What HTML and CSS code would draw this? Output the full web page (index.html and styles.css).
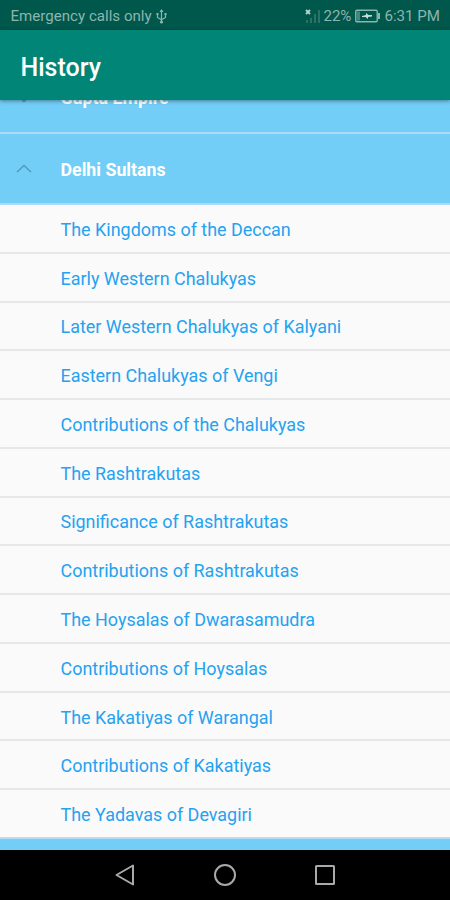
FILE: index.html
```
<!DOCTYPE html>
<html lang="en">
<head>
    <meta charset="UTF-8">
    <meta name="viewport" content="width=device-width, initial-scale=1.0">
    <title>History</title>
    <link rel="stylesheet" href="styles.css">
</head>
<body>
    <!-- Status Bar -->
    <div class="status-bar">
        <span class="carrier">Emergency calls only</span>
        <svg class="usb" width="11" height="15" viewBox="0 0 11 15">
            <path d="M5.5 1v11M1.5 5v3.5l4 2.2 4-2.2V5" fill="none" stroke="currentColor" stroke-width="1.2"/>
            <path d="M5.5 0l2 3h-4zM0.5 4h2v2h-2zM8.5 4h2v2h-2z" fill="currentColor"/>
            <circle cx="5.5" cy="13" r="1.6" fill="currentColor"/>
        </svg>
        <svg class="signal" width="16" height="15" viewBox="0 0 16 15">
            <path d="M1 1l4 4M5 1L1 5" stroke="#b9d2ce" stroke-width="1.8"/>
            <path d="M2 11v3M6 9v5M10 5v9M14 1v13" stroke="#2b7369" stroke-width="2"/>
        </svg>
        <span class="percent">22%</span>
        <svg class="battery" width="26" height="14" viewBox="0 0 26 14">
            <rect x="0.8" y="1.3" width="21.4" height="11.4" rx="1" fill="none" stroke="currentColor" stroke-width="1.4"/>
            <path d="M2 2.5h3v9H2z" fill="currentColor" opacity="0.5"/>
            <path d="M23 4h2v6h-2z" fill="currentColor"/>
            <path d="M7 7l4-1V4l2.500 2H17v1.500l-4 .5v2L10.500 8H7z" fill="#c5dcd8"/>
        </svg>
        <span class="clock">6:31 PM</span>
    </div>

    <!-- App Bar -->
    <header>
        <h1>History</h1>
    </header>

    <!-- Expandable List -->
    <main>
        <div class="group scrolled">
            <svg class="arrow" width="16" height="9" viewBox="0 0 16 9">
                <path d="M1 1l7 6.500 7-6.500"/>
            </svg>
            <h2>Gupta Empire</h2>
        </div>
        <div class="group">
            <svg class="arrow" width="16" height="9" viewBox="0 0 16 9">
                <path d="M1 8l7-6.500L15 8"/>
            </svg>
            <h2>Delhi Sultans</h2>
        </div>
        <ul>
            <li>The Kingdoms of the Deccan</li>
            <li>Early Western Chalukyas</li>
            <li>Later Western Chalukyas of Kalyani</li>
            <li>Eastern Chalukyas of Vengi</li>
            <li>Contributions of the Chalukyas</li>
            <li>The Rashtrakutas</li>
            <li>Significance of Rashtrakutas</li>
            <li>Contributions of Rashtrakutas</li>
            <li>The Hoysalas of Dwarasamudra</li>
            <li>Contributions of Hoysalas</li>
            <li>The Kakatiyas of Warangal</li>
            <li>Contributions of Kakatiyas</li>
            <li>The Yadavas of Devagiri</li>
        </ul>
        <div class="group"></div>
    </main>

    <!-- Navigation Buttons -->
    <nav>
        <svg width="22" height="24" viewBox="0 0 22 24">
            <path d="M19 2.500v19L2.500 12z"/>
        </svg>
        <svg width="24" height="24" viewBox="0 0 24 24">
            <circle cx="12" cy="12" r="10"/>
        </svg>
        <svg width="22" height="24" viewBox="0 0 22 24">
            <rect x="2" y="3" width="18" height="18" rx="0.5"/>
        </svg>
    </nav>
</body>
</html>
```

FILE: styles.css
```
* {
    box-sizing: border-box;
}

body {
    font-family: Roboto, sans-serif;
    margin: 0;
    height: 900px;
    display: flex;
    flex-direction: column;
    overflow: hidden;
    background-color: #fafafa;
}

.status-bar {
    flex: none;
    height: 30px;
    padding: 2px 10px 0 10.5px;
    display: flex;
    align-items: center;
    background-color: #00574b;
    color: #8db5af;
    font-size: 15.1px;
    white-space: nowrap;
}

.usb {
    margin-left: 4px;
}

.signal {
    margin-left: auto;
}

.percent {
    margin-left: 2px;
}

.battery {
    margin: 0 3px 0 4px;
}

header {
    flex: none;
    position: relative;
    height: 70px;
    padding: 4px 20px 0 20.5px;
    display: flex;
    align-items: center;
    background-color: #008577;
    box-shadow: 0 1px 4px rgba(0, 0, 0, 0.4);
}

h1 {
    margin: 0;
    color: white;
    font-size: 25px;
    font-weight: 500;
}

main {
    flex: 1;
    min-height: 0;
    overflow: hidden;
}

.group {
    height: 71.5px;
    padding-left: 16px;
    display: flex;
    align-items: center;
    background-color: #72cdf7;
    border-bottom: 2px solid #afdaf4;
}

.scrolled {
    margin-top: -38px;
}

.scrolled .arrow {
    margin-top: 3px;
}

.arrow {
    fill: none;
    stroke: #519cc0;
    stroke-width: 1.6;
}

h2 {
    margin: 2px 0 0 28.5px;
    color: white;
    font-size: 17.8px;
    font-weight: 700;
}

ul {
    margin: 0;
    padding: 0;
    list-style: none;
}

li {
    height: 48.77px;
    padding: 2px 0 0 60.5px;
    display: flex;
    align-items: center;
    border-bottom: 2px solid #e6e7e8;
    color: #25a2f0;
    font-size: 17.95px;
}

li:last-child {
    border-bottom-color: #b4dcf3;
}

nav {
    flex: none;
    height: 50px;
    display: flex;
    align-items: center;
    justify-content: center;
    gap: 77px;
    background-color: black;
}

nav svg {
    fill: none;
    stroke: #a9a9a9;
    stroke-width: 2;
    stroke-linejoin: round;
}
```
